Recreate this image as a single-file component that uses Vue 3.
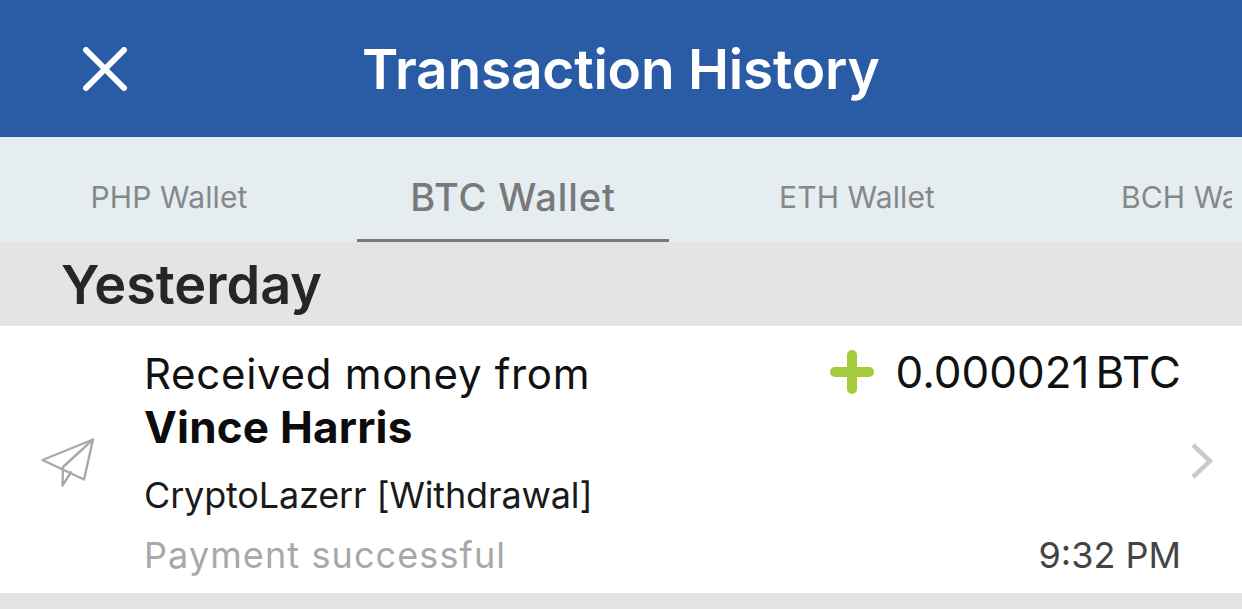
<template>
  <div class="screen">
    <header class="topbar">
      <svg class="close" width="44" height="44" viewBox="0 0 44 44">
        <path d="M3 3 L41 41 M41 3 L3 41" stroke="#fff" stroke-width="6" stroke-linecap="round" />
      </svg>
      <h1 class="title">Transaction History</h1>
    </header>

    <nav class="tabs">
      <div class="tabs-track">
        <div v-for="tab in tabs" :key="tab.name" class="tab" :class="{ active: tab.active }">{{ tab.name }}</div>
      </div>
    </nav>

    <div class="day">Yesterday</div>

    <section class="row">
      <svg class="plane" width="54" height="50" viewBox="0 0 54 50" fill="none" stroke="#a9a9a9" stroke-width="2.4" stroke-linejoin="round">
        <path d="M1.5 22 L52 1.5 L43 41.5 Z" />
        <path d="M52 1.5 L22 29 L21.5 47.5 L30.5 33.5" />
      </svg>

      <div class="info">
        <div class="line-received">Received money from</div>
        <div class="line-name">Vince Harris</div>
        <div class="line-source">CryptoLazerr [Withdrawal]</div>
        <div class="line-status">Payment successful</div>
      </div>

      <div class="side">
        <div class="amount">
          <svg class="plus" width="44" height="44" viewBox="0 0 44 44">
            <path d="M22 5 V39 M5 22 H39" stroke="#a3cb3c" stroke-width="10" stroke-linecap="round" />
          </svg>
          <span class="value">0.000021</span><span class="unit">BTC</span>
        </div>
        <div class="time">9:32 PM</div>
      </div>

      <svg class="chev" width="24" height="36" viewBox="0 0 24 36" fill="none">
        <path d="M3 2 L20 18 L3 34" stroke="#c9c9c9" stroke-width="4.5" />
      </svg>
    </section>
  </div>
</template>

<script setup>
const tabs = [
  { name: 'PHP Wallet' },
  { name: 'BTC Wallet', active: true },
  { name: 'ETH Wallet' },
  { name: 'BCH Wallet' }
]
</script>

<style>
html, body {
  margin: 0;
  background: #e4e4e4;
  overflow: hidden;
}
</style>

<style scoped>
.screen {
  width: 1242px;
  height: 609px;
  overflow: hidden;
  background: #e4e4e4;
  font-family: Inter, "Liberation Sans", sans-serif;
  color: #111;
}

.topbar {
  height: 137px;
  background: #2a5ca5;
  display: flex;
  align-items: center;
  box-sizing: border-box;
  padding-left: 83px;
}

.close {
  display: block;
}

.title {
  margin: 0 0 0 235px;
  font-size: 55px;
  font-weight: 600;
  letter-spacing: -0.2px;
  color: #fff;
  white-space: nowrap;
}

.tabs {
  height: 105px;
  background: #e5edf0;
  box-sizing: border-box;
  padding-left: 13px;
  padding-right: 10px;
}

.tabs-track {
  display: flex;
  height: 105px;
  overflow: hidden;
}

.tab {
  flex: 0 0 auto;
  width: 312px;
  height: 105px;
  margin-right: 32px;
  box-sizing: border-box;
  text-align: center;
  font-size: 30px;
  letter-spacing: 0.1px;
  line-height: 120px;
  color: #85888a;
  white-space: nowrap;
}

.tab.active {
  font-size: 38px;
  font-weight: 500;
  letter-spacing: 0.9px;
  color: #77797b;
  border-bottom: 3px solid #77797b;
}

.day {
  height: 84px;
  box-sizing: border-box;
  padding-left: 61px;
  font-size: 54px;
  font-weight: 600;
  line-height: 86px;
  color: #262626;
}

.row {
  height: 267px;
  background: #fff;
  display: flex;
  position: relative;
}

.plane {
  position: absolute;
  left: 41px;
  top: 112px;
}

.info {
  margin-left: 144px;
  padding-top: 22px;
  white-space: nowrap;
}

.line-received {
  font-size: 42px;
  letter-spacing: 0.7px;
  line-height: 52px;
  color: #111;
}

.line-name {
  font-size: 44px;
  font-weight: 700;
  letter-spacing: 0.2px;
  line-height: 55px;
  color: #0c0c0c;
}

.line-source {
  font-size: 36px;
  letter-spacing: -0.15px;
  line-height: 44px;
  margin-top: 18px;
  color: #1a1a1a;
}

.line-status {
  font-size: 36px;
  letter-spacing: 1.1px;
  line-height: 44px;
  margin-top: 16px;
  color: #a8a8a8;
}

.side {
  margin-left: auto;
  margin-right: 61px;
  padding-top: 20px;
  padding-bottom: 16px;
  display: flex;
  flex-direction: column;
  align-items: flex-end;
  justify-content: space-between;
  white-space: nowrap;
}

.amount {
  display: flex;
  align-items: center;
  height: 52px;
  font-size: 44px;
  color: #111;
}

.plus {
  margin-right: 22px;
}

.unit {
  margin-left: 6px;
}

.time {
  font-size: 36px;
  line-height: 44px;
  color: #444;
}

.chev {
  position: absolute;
  left: 1190px;
  top: 117px;
}
</style>
